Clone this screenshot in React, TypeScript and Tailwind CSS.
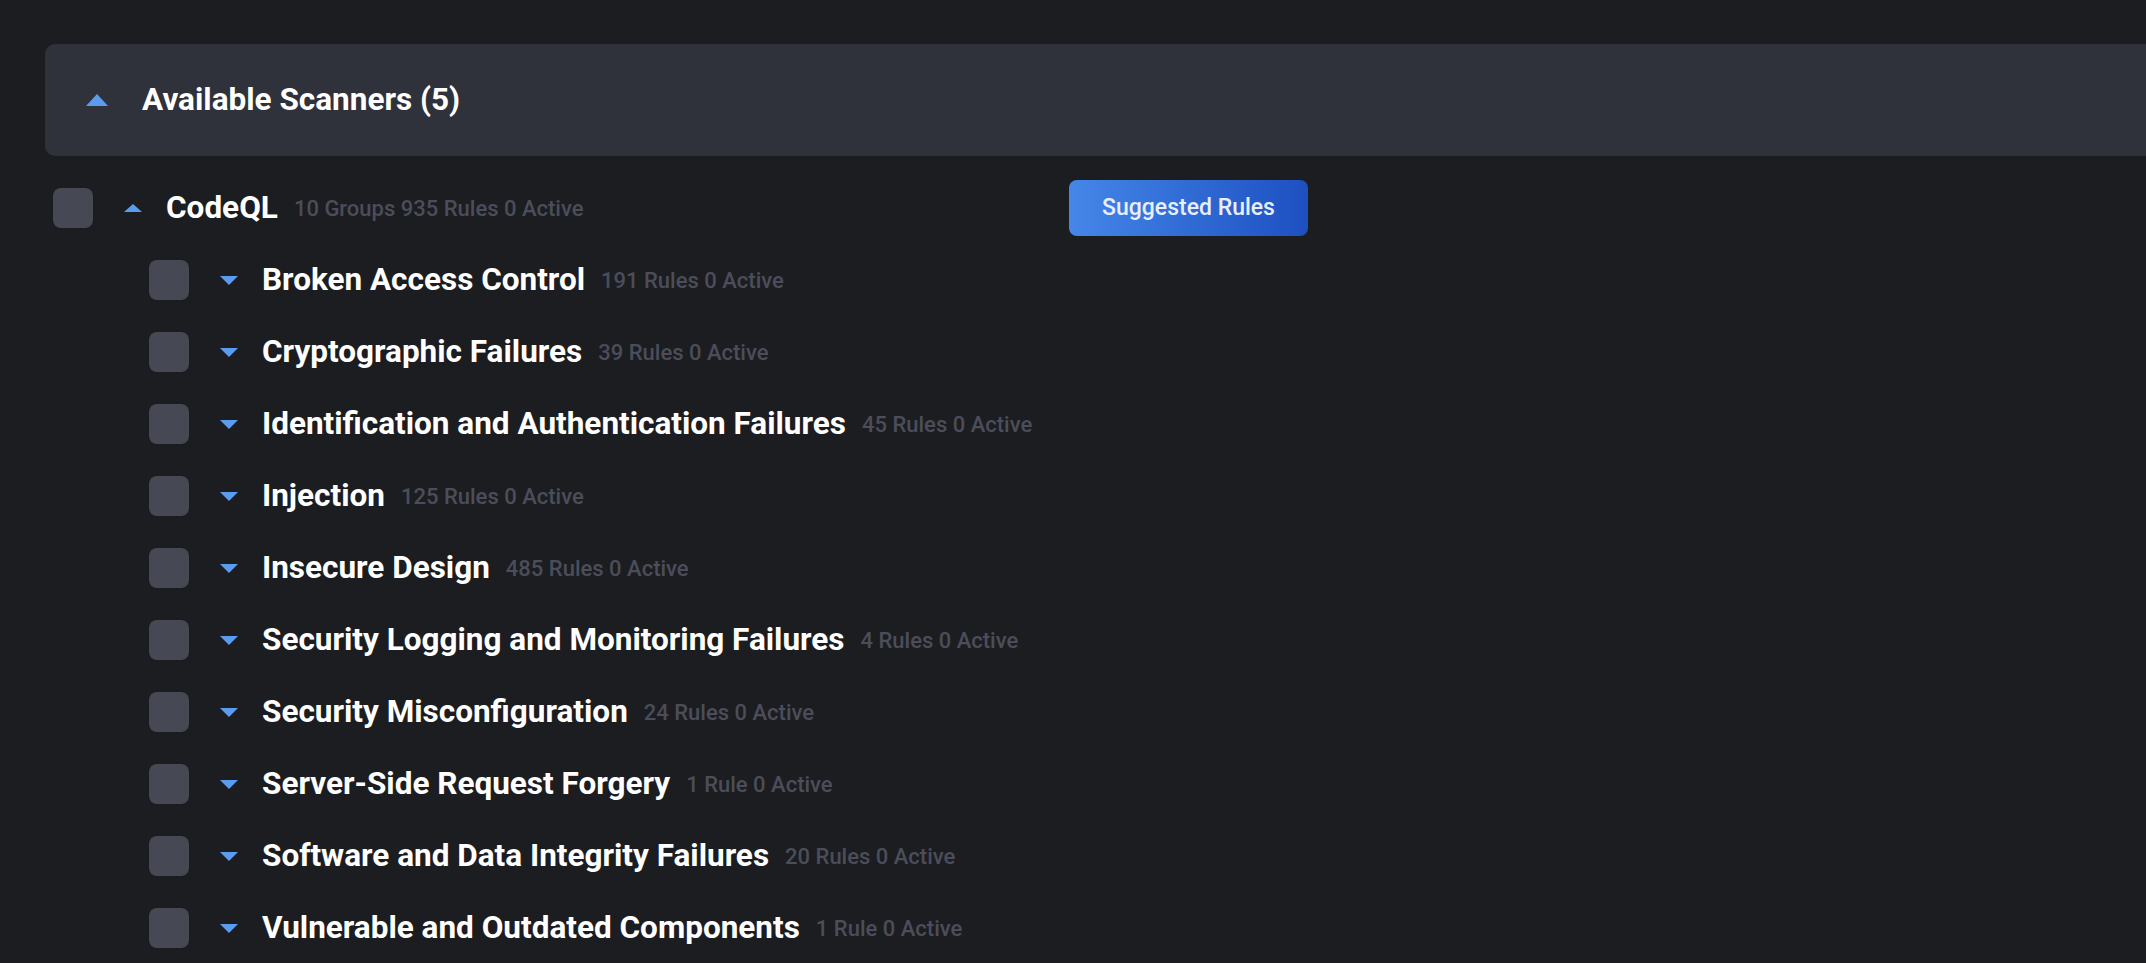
import React from "react";

const groups: [string, string][] = [
  ["Broken Access Control", "191 Rules 0 Active"],
  ["Cryptographic Failures", "39 Rules 0 Active"],
  ["Identification and Authentication Failures", "45 Rules 0 Active"],
  ["Injection", "125 Rules 0 Active"],
  ["Insecure Design", "485 Rules 0 Active"],
  ["Security Logging and Monitoring Failures", "4 Rules 0 Active"],
  ["Security Misconfiguration", "24 Rules 0 Active"],
  ["Server-Side Request Forgery", "1 Rule 0 Active"],
  ["Software and Data Integrity Failures", "20 Rules 0 Active"],
  ["Vulnerable and Outdated Components", "1 Rule 0 Active"],
];

function Caret({ up, w, h }: { up?: boolean; w: number; h: number }) {
  const pts = up ? `0,${h} ${w / 2},0 ${w},${h}` : `0,0 ${w},0 ${w / 2},${h}`;
  return (
    <svg width={w} height={h} viewBox={`0 0 ${w} ${h}`} className="shrink-0">
      <polygon points={pts} fill="#5b9cf0" />
    </svg>
  );
}

function Checkbox() {
  return <div className="h-10 w-10 shrink-0 rounded-lg bg-[#464854]" />;
}

function Row({ name, meta, up }: { name: string; meta: string; up?: boolean }) {
  return (
    <div className="flex h-10 items-center">
      <Checkbox />
      <div className="ml-[31px]">
        <Caret up={up} w={18} h={up ? 8 : 9} />
      </div>
      <span className="ml-[24px] whitespace-nowrap text-[31.5px] font-bold text-white">{name}</span>
      <span className="ml-4 whitespace-nowrap text-[22px] font-medium text-[#4b4d5a]">{meta}</span>
    </div>
  );
}

export default function App() {
  return (
    <div className="h-screen overflow-hidden bg-[#1c1d20] pl-[45px] pt-[44px] font-['Roboto',sans-serif]">
      <div className="-mr-6 flex h-[112px] items-center rounded-[10px] bg-[#2f313b] pl-[41px]">
        <Caret up w={22} h={12} />
        <span className="ml-[34px] text-[31.5px] font-bold text-white">Available Scanners (5)</span>
      </div>

      <div className="ml-[8px] mt-[24px]">
        <div className="flex h-14 items-center">
          <div className="w-[1016px] shrink-0">
            <Row name="CodeQL" meta="10 Groups 935 Rules 0 Active" up />
          </div>
          <button className="h-14 w-[239px] rounded-lg bg-gradient-to-r from-[#4587e8] to-[#1e4fc1] text-[23px] font-medium text-[#e8eefc]">
            Suggested Rules
          </button>
        </div>

        <div className="mt-[24px] flex flex-col gap-[32px] pl-[96px]">
          {groups.map(([name, meta]) => (
            <Row key={name} name={name} meta={meta} />
          ))}
        </div>
      </div>
    </div>
  );
}
